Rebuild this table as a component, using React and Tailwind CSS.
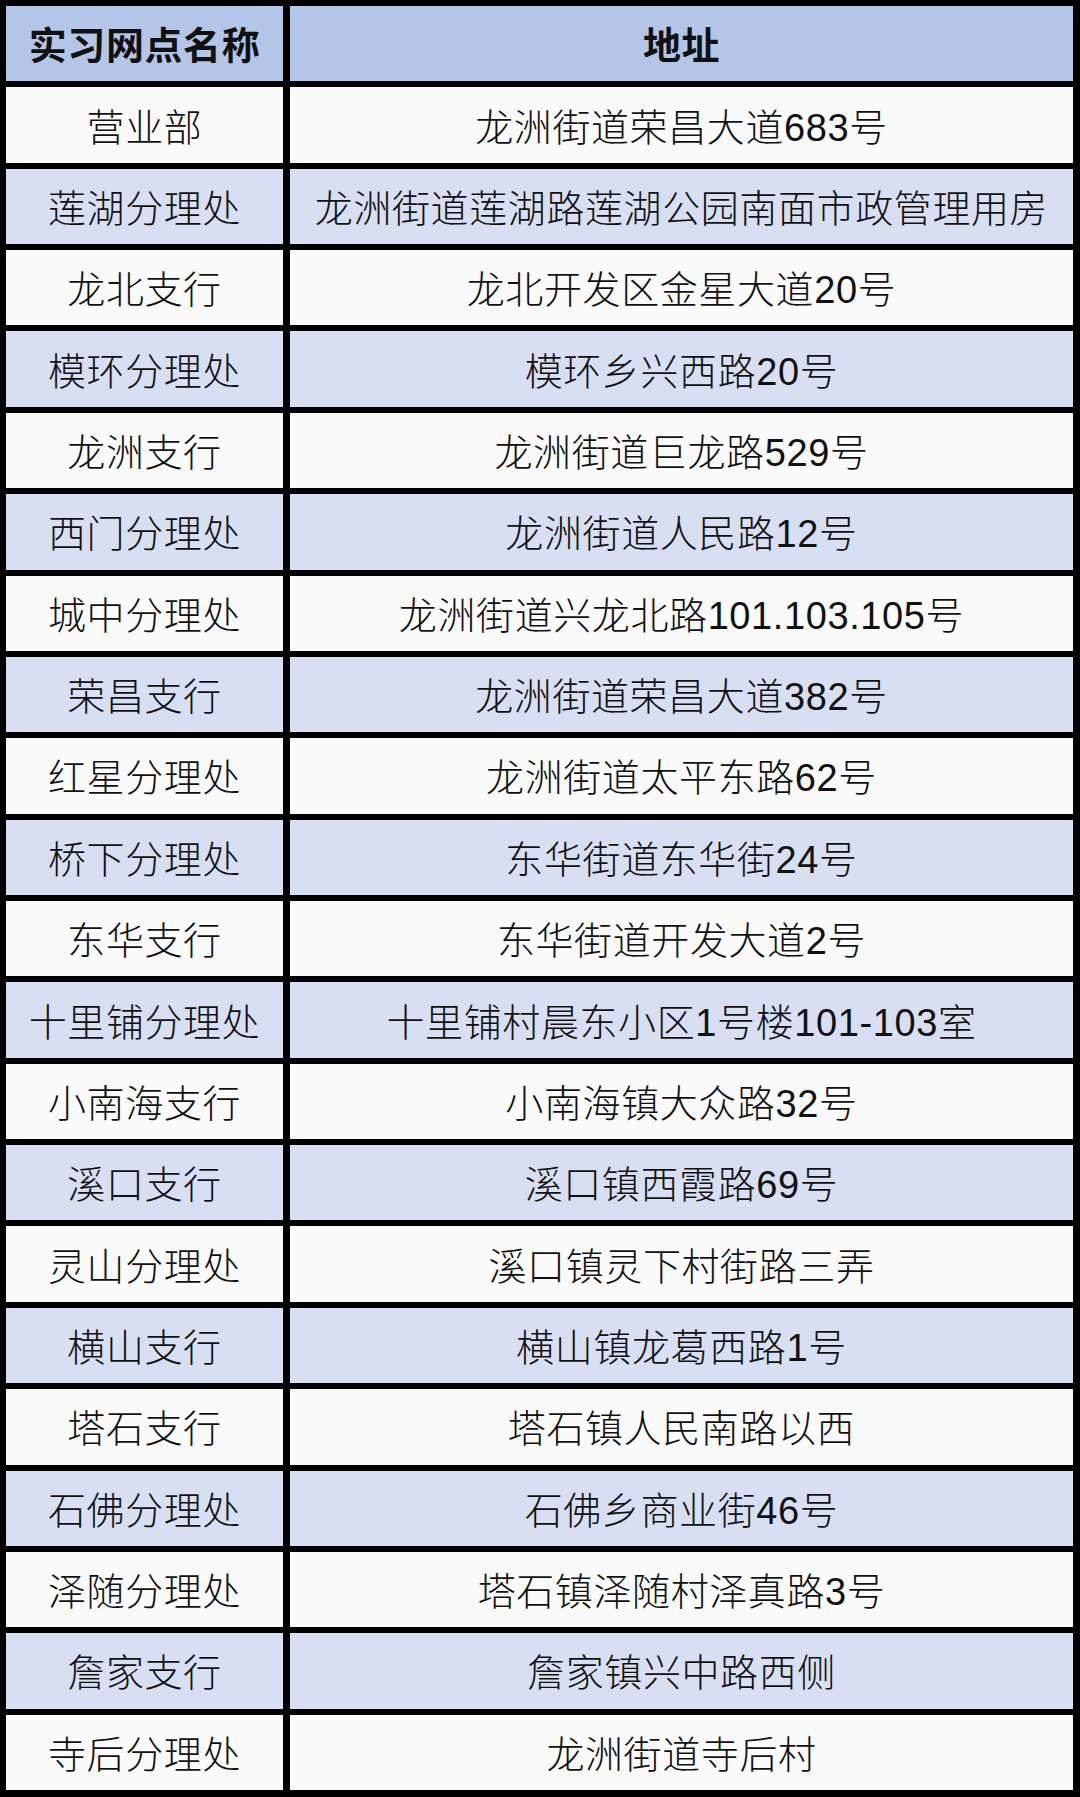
const rows = [
  ["营业部", "龙洲街道荣昌大道683号"],
  ["莲湖分理处", "龙洲街道莲湖路莲湖公园南面市政管理用房"],
  ["龙北支行", "龙北开发区金星大道20号"],
  ["模环分理处", "模环乡兴西路20号"],
  ["龙洲支行", "龙洲街道巨龙路529号"],
  ["西门分理处", "龙洲街道人民路12号"],
  ["城中分理处", "龙洲街道兴龙北路101.103.105号"],
  ["荣昌支行", "龙洲街道荣昌大道382号"],
  ["红星分理处", "龙洲街道太平东路62号"],
  ["桥下分理处", "东华街道东华街24号"],
  ["东华支行", "东华街道开发大道2号"],
  ["十里铺分理处", "十里铺村晨东小区1号楼101-103室"],
  ["小南海支行", "小南海镇大众路32号"],
  ["溪口支行", "溪口镇西霞路69号"],
  ["灵山分理处", "溪口镇灵下村街路三弄"],
  ["横山支行", "横山镇龙葛西路1号"],
  ["塔石支行", "塔石镇人民南路以西"],
  ["石佛分理处", "石佛乡商业街46号"],
  ["泽随分理处", "塔石镇泽随村泽真路3号"],
  ["詹家支行", "詹家镇兴中路西侧"],
  ["寺后分理处", "龙洲街道寺后村"],
];

const font = { fontFamily: '"Liberation Sans", "Noto Sans CJK SC", sans-serif' };

const Cell = ({ children, bg, bold }) => (
  <div className={`flex items-center justify-center pt-[5px] ${bg}`}>
    <span
      className={`text-[38px] leading-none tracking-[0.6px] text-[#111] ${bold ? "font-bold" : "font-light"}`}
    >
      {children}
    </span>
  </div>
);

export default function App() {
  return (
    <div
      style={font}
      className="w-[1080px] h-[1797px] bg-black pt-[6px] pl-[6px] pr-[7px] pb-[7px] grid grid-cols-[277px_1fr] grid-rows-[repeat(22,minmax(0,1fr))] gap-x-[7px] gap-y-[6px]"
    >
      <Cell bg="bg-[#b4c6e7]" bold>实习网点名称</Cell>
      <Cell bg="bg-[#b4c6e7]" bold>地址</Cell>
      {rows.map((r, i) => {
        const bg = i % 2 === 0 ? "bg-[#fafafa]" : "bg-[#d8dff2]";
        return [
          <Cell key={`a${i}`} bg={bg}>{r[0]}</Cell>,
          <Cell key={`b${i}`} bg={bg}>{r[1]}</Cell>,
        ];
      })}
    </div>
  );
}
